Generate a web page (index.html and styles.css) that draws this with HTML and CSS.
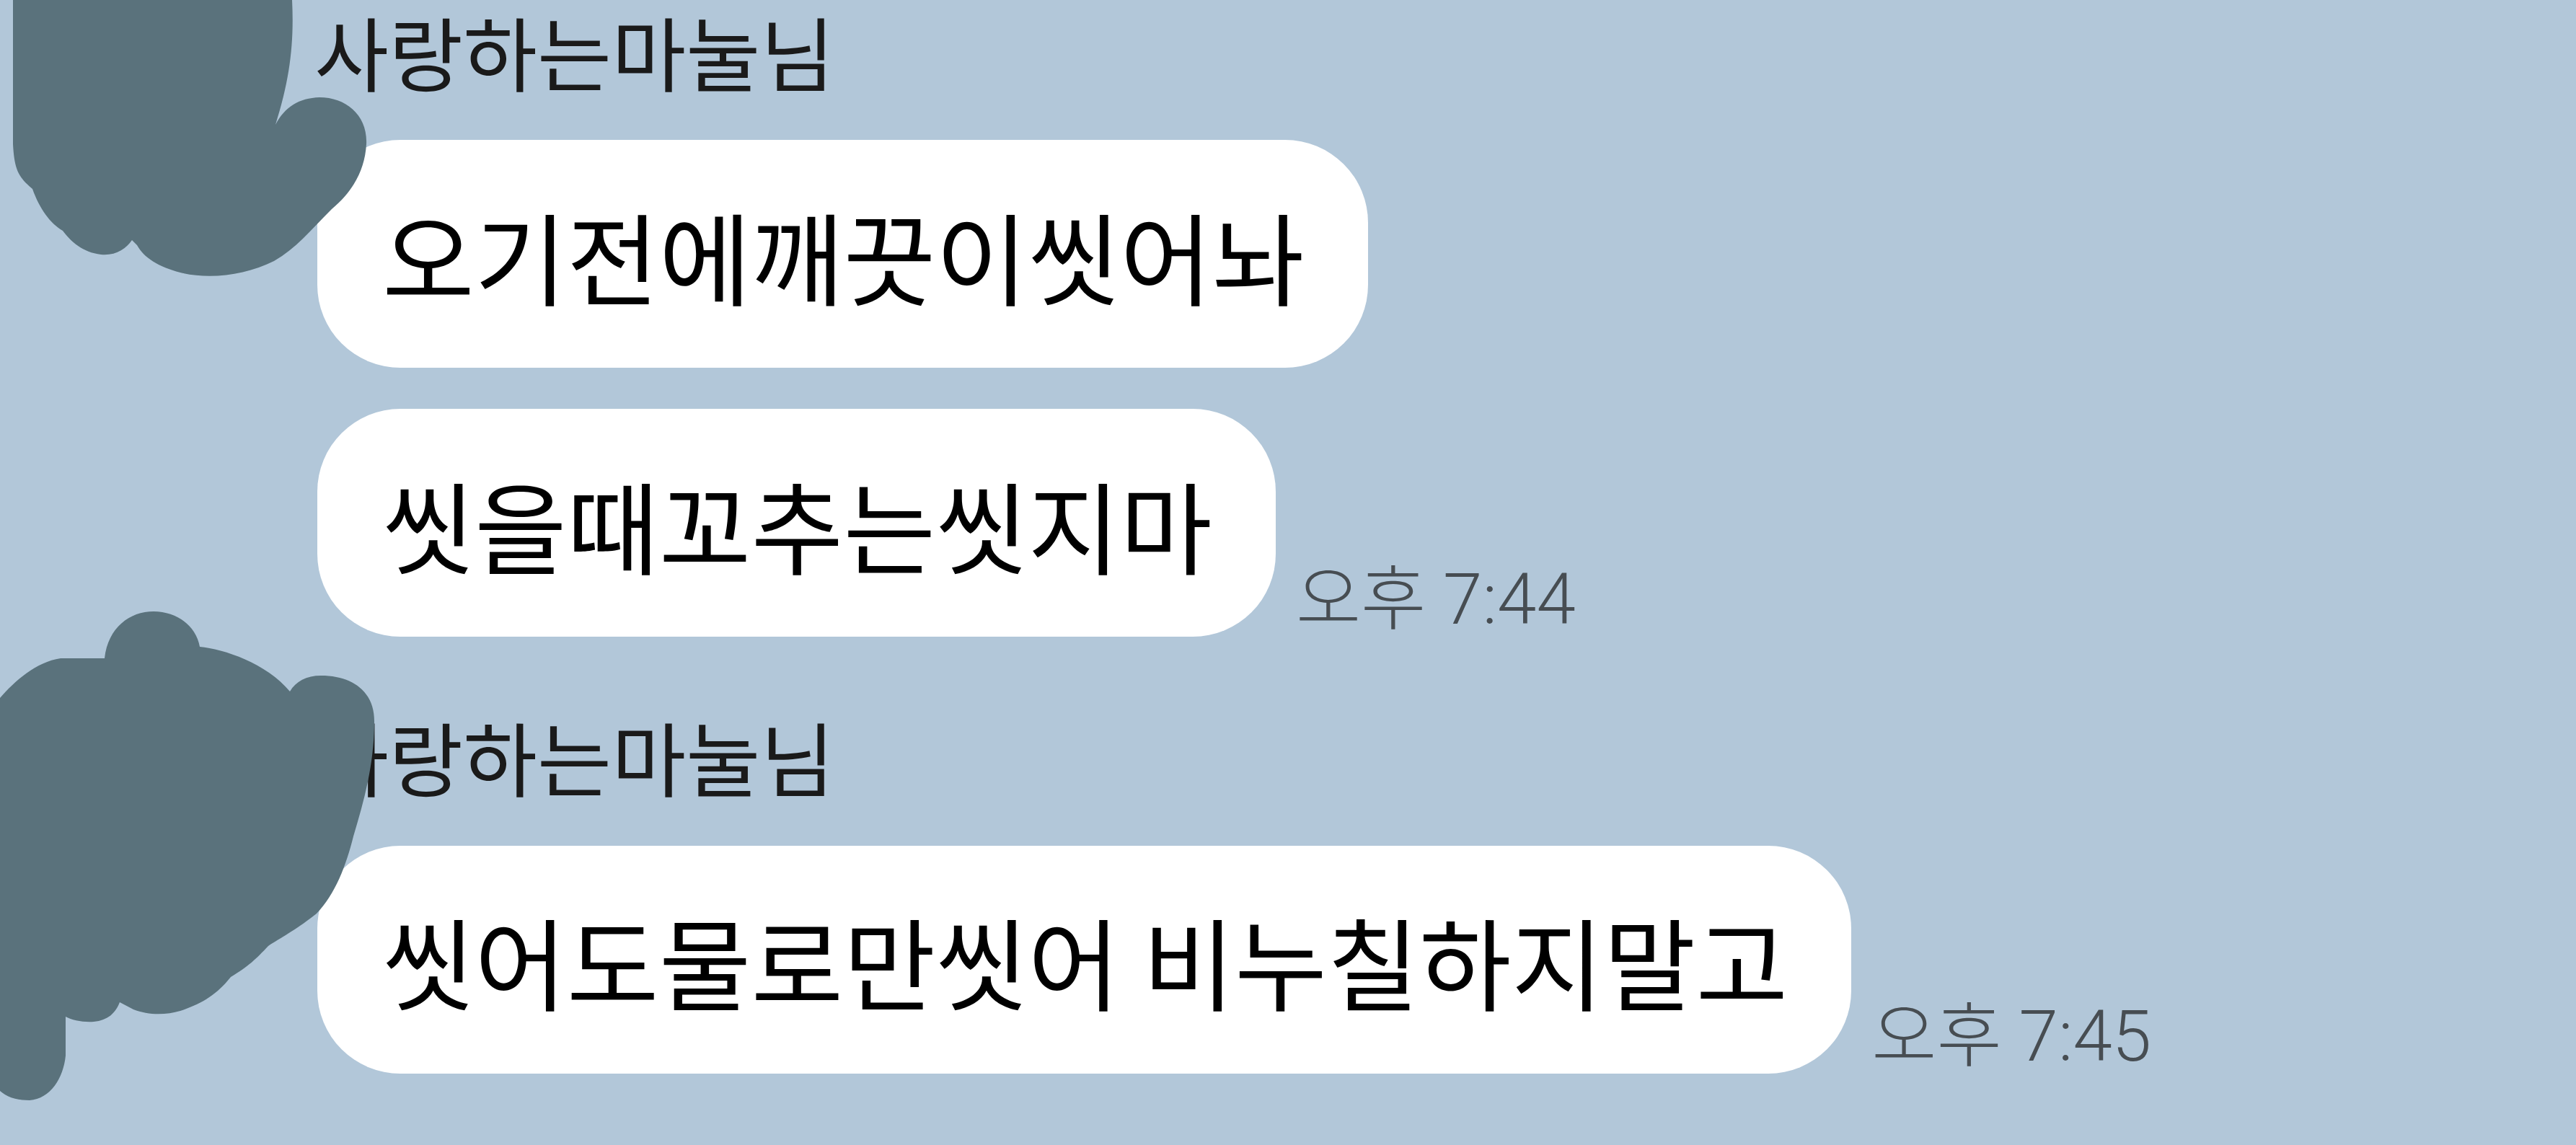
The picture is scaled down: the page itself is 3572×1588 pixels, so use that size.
FILE: index.html
```html
<!DOCTYPE html>
<html>
<head>
  <meta charset="utf-8">
  <title>사랑하는마눌님</title>
  <link rel="stylesheet" href="styles.css">
</head>
<body>
  <div class="chat">
    <div class="group">
      <div class="avatar"></div>
      <div class="messages">
        <div class="name">사랑하는마눌님</div>
        <div class="row">
          <div class="bubble">오기전에깨끗이씻어놔</div>
        </div>
        <div class="row">
          <div class="bubble">씻을때꼬추는씻지마</div>
          <span class="time">오후 7:44</span>
        </div>
      </div>
    </div>

    <div class="group">
      <div class="avatar"></div>
      <div class="messages">
        <div class="name">사랑하는마눌님</div>
        <div class="row">
          <div class="bubble">씻어도물로만씻어 비누칠하지말고</div>
          <span class="time">오후 7:45</span>
        </div>
      </div>
    </div>

    <!-- profile pictures scribbled over -->
    <svg class="scribble" width="560" height="1588" viewBox="0 0 560 1588">
      <path d="M18,0 L405,0 C408,60 402,110 382,173 C395,148 415,136 443,135 C480,135 510,160 508,200 C506,235 490,265 460,290 C430,320 410,345 380,362 C340,382 290,388 250,378 C220,370 200,358 190,340 L183,333 C175,345 160,355 140,353 C115,350 98,335 87,320 C70,310 55,290 45,262 C25,245 20,235 18,200 Z"/>
      <path d="M0,968 C20,945 50,918 84,913 L145,913 C150,870 180,848 213,848 C245,848 272,868 277,897 C310,900 370,920 402,959 C410,945 425,937 445,937 C490,937 519,960 519,1000 C519,1060 505,1110 490,1160 C480,1200 465,1240 439,1267 C410,1290 390,1300 372,1312 C355,1330 345,1340 320,1355 C300,1380 280,1392 250,1402 C230,1408 205,1408 185,1400 L166,1390 C160,1405 150,1415 130,1417 C115,1418 100,1415 91,1410 L91,1464 C88,1495 70,1524 41,1526 C20,1526 8,1520 0,1513 Z"/>
    </svg>
  </div>
</body>
</html>
```

FILE: styles.css
```css
body {
  margin: 0;
  background-color: #b2c7d9;
  font-family: "Noto Sans CJK KR", "Noto Sans", sans-serif;
  color: #000;
}
.chat {
  position: relative;
  height: 1588px;
  overflow: hidden;
  padding-top: 3px;
  box-sizing: border-box;
}
.group {
  display: flex;
}
.group + .group {
  margin-top: 98px;
}
.avatar {
  width: 440px;
  flex: none;
}
.messages {
  display: flex;
  flex-direction: column;
  align-items: flex-start;
}
.name {
  font-size: 112px;
  line-height: 1.2;
  margin-left: -4px;
  margin-bottom: 57px;
  color: #1a1a1a;
}
.row {
  display: flex;
  align-items: flex-end;
  gap: 28px;
}
.row + .row {
  margin-top: 57px;
}
.bubble {
  height: 316px;
  box-sizing: border-box;
  padding: 0 88px 0 90px;
  display: flex;
  align-items: center;
  background: #fff;
  border-radius: 115px;
  font-size: 139px;
  white-space: nowrap;
}
.time {
  font-family: Roboto, "Noto Sans CJK KR", sans-serif;
  font-size: 98px;
  font-weight: 300;
  line-height: 1;
  color: #474d52;
  white-space: nowrap;
  margin-bottom: 2px;
}
.scribble {
  position: absolute;
  top: 0;
  left: 0;
  fill: #5a727c;
}
```
